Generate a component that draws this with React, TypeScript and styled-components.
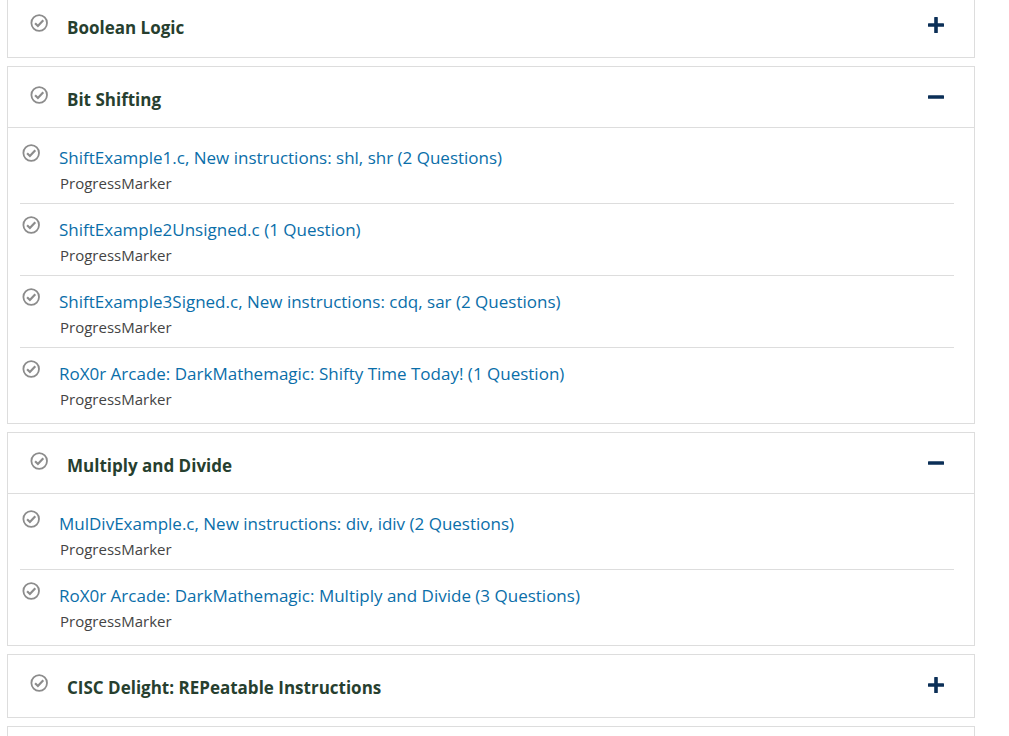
import React, { useState } from "react";
import styled, { createGlobalStyle } from "styled-components";

const GlobalStyle = createGlobalStyle`
  *, *::before, *::after { box-sizing: border-box; }
  body {
    margin: 0;
    background: #ffffff;
    font-family: "Segoe UI", "Open Sans", "Noto Sans", sans-serif;
  }
`;

const Page = styled.main`
  height: 100vh;
  overflow: hidden;
  padding: 0 34px 0 7px;
`;

const Modules = styled.div`
  display: flex;
  flex-direction: column;
  gap: 8px;
  margin-top: -6px;
`;

const Card = styled.section`
  border: 1px solid #dddddd;
  background: #ffffff;
`;

const Header = styled.header<{ $open: boolean }>`
  display: flex;
  align-items: flex-start;
  height: ${(p) => (p.$open ? 61 : 62)}px;
  padding: 19px 30px 0 22px;
  border-bottom: ${(p) => (p.$open ? "1px solid #dddddd" : "0")};
`;

const Title = styled.h2`
  flex: 1;
  margin: 0 0 0 19px;
  font-size: 17px;
  line-height: 28px;
  font-weight: 700;
  color: #273f2f;
`;

const Toggle = styled.button`
  display: flex;
  margin: 3px 0 0;
  padding: 0;
  border: 0;
  background: none;
  color: #0b2f57;
  cursor: pointer;
`;

const Items = styled.ul`
  list-style: none;
  margin: 0;
  padding: 4px 20px 3px 12px;
`;

const Item = styled.li`
  display: flex;
  height: 72px;
  padding: 12px 0 0 2px;
  border-bottom: 1px solid #dddddd;

  &:last-child {
    border-bottom-color: transparent;
  }
`;

const ItemText = styled.div`
  display: flex;
  flex-direction: column;
  align-items: flex-start;
  margin-left: 19px;
`;

const ItemLink = styled.a`
  font-size: 17px;
  line-height: 28px;
  color: #0a6ea9;
  text-decoration: none;
  white-space: nowrap;
`;

const ItemKind = styled.span`
  padding-left: 1px;
  font-size: 15px;
  line-height: 22px;
  color: #444444;
`;

const StatusSvg = styled.svg`
  display: block;
  flex: none;
`;

function StatusIcon() {
  return (
    <StatusSvg width="18" height="18" viewBox="0 0 18 18" fill="none" stroke="#8c8c8c" aria-hidden="true">
      <circle cx="9.2" cy="9" r="7.8" strokeWidth="1.8" />
      <path d="M5.1 9.3 7.9 12 13.3 6.3" strokeWidth="2.2" />
    </StatusSvg>
  );
}

function ToggleIcon({ open }: { open: boolean }) {
  return (
    <svg width="16" height="16" viewBox="0 0 16 16" fill="currentColor" aria-hidden="true">
      <rect x="0" y="6.2" width="16" height="3.6" rx="0.6" />
      {!open && <rect x="6.2" y="0" width="3.6" height="16" rx="0.6" />}
    </svg>
  );
}

interface ModuleData {
  title: string;
  open: boolean;
  items: string[];
}

const modules: ModuleData[] = [
  { title: "Boolean Logic", open: false, items: [] },
  {
    title: "Bit Shifting",
    open: true,
    items: [
      "ShiftExample1.c, New instructions: shl, shr (2 Questions)",
      "ShiftExample2Unsigned.c (1 Question)",
      "ShiftExample3Signed.c, New instructions: cdq, sar (2 Questions)",
      "RoX0r Arcade: DarkMathemagic: Shifty Time Today! (1 Question)",
    ],
  },
  {
    title: "Multiply and Divide",
    open: true,
    items: [
      "MulDivExample.c, New instructions: div, idiv (2 Questions)",
      "RoX0r Arcade: DarkMathemagic: Multiply and Divide (3 Questions)",
    ],
  },
  { title: "CISC Delight: REPeatable Instructions", open: false, items: [] },
];

function Module({ data }: { data: ModuleData }) {
  const [open, setOpen] = useState(data.open);
  return (
    <Card>
      <Header $open={open}>
        <StatusIcon />
        <Title>{data.title}</Title>
        <Toggle
          type="button"
          aria-expanded={open}
          aria-label={`Toggle ${data.title}`}
          onClick={() => setOpen(!open)}
        >
          <ToggleIcon open={open} />
        </Toggle>
      </Header>
      {open && (
        <Items>
          {data.items.map((item) => (
            <Item key={item}>
              <StatusIcon />
              <ItemText>
                <ItemLink href="#">{item}</ItemLink>
                <ItemKind>ProgressMarker</ItemKind>
              </ItemText>
            </Item>
          ))}
        </Items>
      )}
    </Card>
  );
}

export default function App() {
  return (
    <>
      <GlobalStyle />
      <Page>
        <Modules>
          {modules.map((m) => (
            <Module key={m.title} data={m} />
          ))}
          <Card>
            <Header $open={false} />
          </Card>
        </Modules>
      </Page>
    </>
  );
}
